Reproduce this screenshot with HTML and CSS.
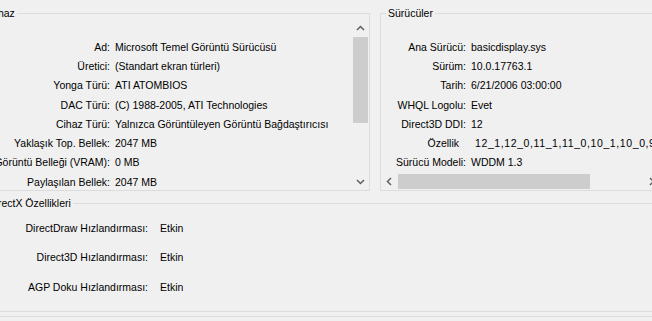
FILE: index.html
```html
<!DOCTYPE html>
<html lang="tr">
<head>
    <meta charset="UTF-8">
    <title>Ekran</title>
    <link rel="stylesheet" href="styles.css">
</head>
<body>
    <div class="window">

        <div class="top-row">
            <!-- Cihaz -->
            <fieldset class="group device">
                <legend>Cihaz</legend>
                <div class="list">
                    <div class="rows">
                        <span class="label">Ad:</span><span>Microsoft Temel Görüntü Sürücüsü</span>
                        <span class="label">Üretici:</span><span>(Standart ekran türleri)</span>
                        <span class="label">Yonga Türü:</span><span>ATI ATOMBIOS</span>
                        <span class="label">DAC Türü:</span><span>(C) 1988-2005, ATI Technologies</span>
                        <span class="label">Cihaz Türü:</span><span>Yalnızca Görüntüleyen Görüntü Bağdaştırıcısı</span>
                        <span class="label">Yaklaşık Top. Bellek:</span><span>2047 MB</span>
                        <span class="label">Görüntü Belleği (VRAM):</span><span>0 MB</span>
                        <span class="label">Paylaşılan Bellek:</span><span>2047 MB</span>
                    </div>
                    <div class="vscroll">
                        <div class="sbtn">
                            <svg width="17" height="17" viewBox="0 0 17 17"><polyline points="5,10 8.5,6.5 12,10" fill="none" stroke="#606060" stroke-width="1.5"/></svg>
                        </div>
                        <div class="vthumb"></div>
                        <div class="vtrack"></div>
                        <div class="sbtn">
                            <svg width="17" height="17" viewBox="0 0 17 17"><polyline points="5,7 8.5,10.5 12,7" fill="none" stroke="#606060" stroke-width="1.5"/></svg>
                        </div>
                    </div>
                </div>
            </fieldset>

            <!-- Sürücüler -->
            <fieldset class="group drivers">
                <legend>Sürücüler</legend>
                <div class="rows">
                    <span class="label">Ana Sürücü:</span><span>basicdisplay.sys</span>
                    <span class="label">Sürüm:</span><span>10.0.17763.1</span>
                    <span class="label">Tarih:</span><span>6/21/2006 03:00:00</span>
                    <span class="label">WHQL Logolu:</span><span>Evet</span>
                    <span class="label">Direct3D DDI:</span><span>12</span>
                    <span class="label nocolon">Özellik</span><span class="wide">12_1,12_0,11_1,11_0,10_1,10_0,9_3,9_2,9_1</span>
                    <span class="label">Sürücü Modeli:</span><span>WDDM 1.3</span>
                </div>
                <div class="hscroll">
                    <div class="sbtn">
                        <svg width="17" height="17" viewBox="0 0 17 17"><polyline points="10,5 6.5,8.5 10,12" fill="none" stroke="#606060" stroke-width="1.5"/></svg>
                    </div>
                    <div class="hthumb"></div>
                    <div class="htrack"></div>
                    <div class="sbtn">
                        <svg width="17" height="17" viewBox="0 0 17 17"><polyline points="7,5 10.5,8.5 7,12" fill="none" stroke="#606060" stroke-width="1.5"/></svg>
                    </div>
                </div>
            </fieldset>
        </div>

        <!-- DirectX Özellikleri -->
        <fieldset class="group features">
            <legend>DirectX Özellikleri</legend>
            <div class="feature-rows">
                <span class="label">DirectDraw Hızlandırması:</span><span>Etkin</span>
                <span class="label">Direct3D Hızlandırması:</span><span>Etkin</span>
                <span class="label">AGP Doku Hızlandırması:</span><span>Etkin</span>
            </div>
        </fieldset>

        <div class="notes"></div>
    </div>
</body>
</html>
```

FILE: styles.css
```css
html, body {
    margin: 0;
    overflow: hidden;
}
body {
    width: 652px;
    height: 321px;
    background-color: #f0f0f0;
    font-family: "Liberation Sans", Arial, sans-serif;
    font-size: 10.5px;
    color: #000;
}
.window {
    margin-left: -20px;
    width: 700px;
}

/* group boxes */
.group {
    margin: 0;
    padding: 0;
    border: 1px solid #dcdcdc;
    min-width: 0;
}
.group legend {
    margin-left: 5px;
    padding: 0 2px;
    line-height: 13px;
}

.top-row {
    display: flex;
    gap: 10px;
    margin-top: 7px;
}
.device {
    width: 388px;
}
.drivers {
    width: 279px;
    display: flex;
    flex-direction: column;
}

.list {
    display: flex;
    height: 170px;
}
.rows {
    flex: 1;
    display: grid;
    grid-template-columns: 129px auto;
    grid-auto-rows: 19.3px;
    column-gap: 5px;
    align-items: center;
    padding-top: 17px;
    white-space: nowrap;
    overflow: hidden;
}
.drivers .rows {
    grid-template-columns: 85px auto;
    height: 153px;
    box-sizing: border-box;
    flex: none;
}
.label {
    text-align: right;
}
.nocolon {
    padding-right: 7px;
}
.wide {
    padding-left: 4px;
    letter-spacing: 0.6px;
}

/* scroll bars */
.vscroll {
    width: 17px;
    display: flex;
    flex-direction: column;
    background-color: #f0f0f0;
}
.sbtn {
    width: 17px;
    height: 17px;
    flex: none;
}
.sbtn svg {
    display: block;
}
.vthumb {
    height: 86px;
    margin: 0 1px;
    background-color: #cdcdcd;
}
.vtrack {
    flex: 1;
}
.hscroll {
    display: flex;
    height: 17px;
}
.hthumb {
    width: 192px;
    margin: 1px 0;
    background-color: #cdcdcd;
}
.htrack {
    flex: 1;
}

/* DirectX features */
.features {
    margin-top: 6px;
    width: 690px;
}
.feature-rows {
    display: grid;
    grid-template-columns: 167px auto;
    grid-auto-rows: 29.5px;
    column-gap: 12px;
    align-items: center;
    padding-top: 3px;
    height: 98px;
}

.notes {
    margin-top: 4px;
    border-top: 1px solid #dcdcdc;
    height: 20px;
}
```
